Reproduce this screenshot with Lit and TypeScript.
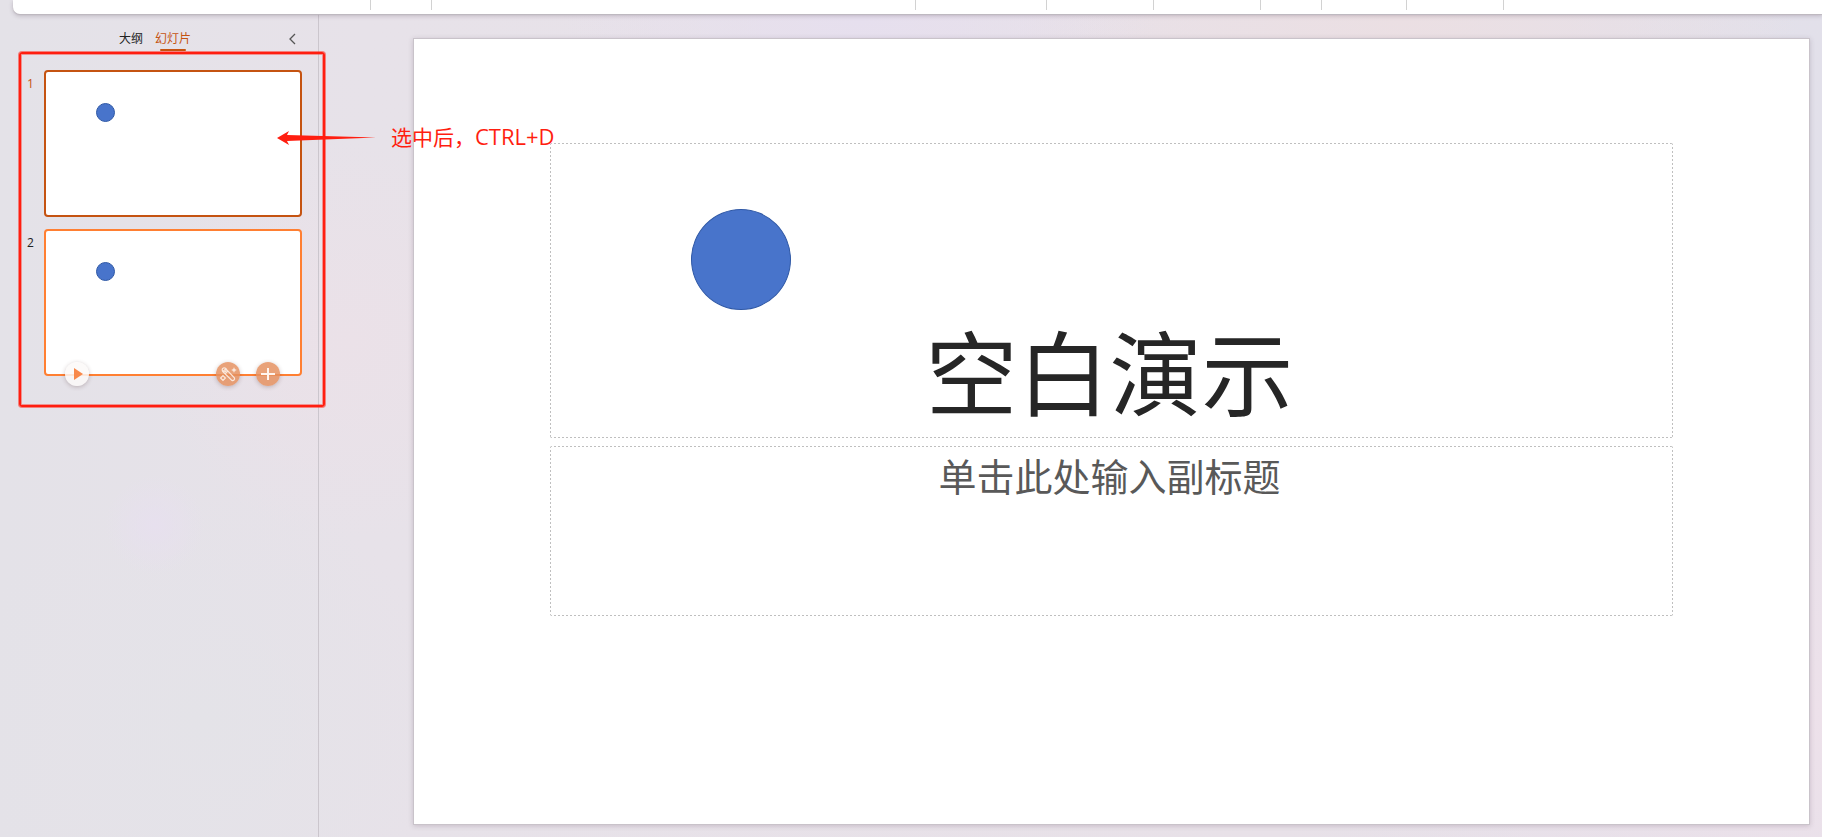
import { LitElement, html, css } from "lit";
import { customElement, property, state } from "lit/decorators.js";

const fonts = css`"Open Sans", "Noto Sans CJK SC", sans-serif`;

/** Bottom edge of the ribbon: group widths are data, each ends in a separator. */
@customElement("ribbon-edge")
class RibbonEdge extends LitElement {
  static styles = css`
    :host {
      display: block;
      position: relative;
      z-index: 1;
      margin-left: 13px;
      height: 14px;
      background: #fff;
      border-bottom-left-radius: 7px;
      box-shadow: 0 1px 1px #bdb8bf, 0 2px 4px rgba(80, 60, 80, 0.25);
    }
    .groups {
      display: flex;
      height: 10px;
    }
    .group {
      flex: none;
      box-sizing: border-box;
      border-right: 1px solid #d2d2d2;
    }
  `;
  private widths = [358, 61, 484, 131, 107, 107, 61, 85, 97];

  render() {
    return html`<div class="groups">
      ${this.widths.map((w) => html`<div class="group" style="width:${w}px"></div>`)}
    </div>`;
  }
}

@customElement("slide-thumb")
class SlideThumb extends LitElement {
  @property({ type: Number }) number = 1;
  @property({ type: Boolean, reflect: true }) active = false;
  @property({ type: Boolean }) tools = false;

  static styles = css`
    :host {
      display: flex;
      position: relative;
      font-family: ${fonts};
      --edge: #ff7f32;
      --num: #222;
    }
    :host([active]) {
      --edge: #c55311;
      --num: #c55311;
    }
    .num {
      width: 17px;
      padding-top: 5px;
      font-size: 12px;
      line-height: 18px;
      color: var(--num);
    }
    .thumb {
      flex: 1;
      display: block;
      box-sizing: border-box;
      height: 147px;
      padding: 0;
      border: 2px solid var(--edge);
      border-radius: 4px;
      background: #fff;
    }
    .preview {
      display: block;
      width: 100%;
      height: 100%;
    }
    .tool {
      position: absolute;
      bottom: -10px;
      width: 24px;
      height: 24px;
      padding: 0;
      border: 0;
      border-radius: 50%;
      background: rgba(229, 146, 98, 0.85);
      box-shadow: 0 1px 4px rgba(90, 60, 60, 0.3);
    }
    .tool svg {
      display: block;
    }
    .play {
      left: 38px;
      background: rgba(252, 249, 248, 0.85);
    }
    .wand {
      right: 62px;
    }
    .add {
      right: 22px;
    }
  `;

  render() {
    return html`
      <span class="num">${this.number}</span>
      <button class="thumb" aria-label="幻灯片 ${this.number}">
        <svg class="preview" viewBox="0 0 254 143">
          <circle cx="59.5" cy="40.5" r="9" fill="#4874cb" stroke="#3059a6" stroke-width="1" />
        </svg>
      </button>
      ${this.tools
        ? html`
            <button class="tool play" aria-label="播放">
              <svg width="24" height="24"><path d="M9 6L18 12L9 18Z" fill="#f8894b" /></svg>
            </button>
            <button class="tool wand" aria-label="美化">
              <svg width="24" height="24" fill="none" stroke="#fbe8dc" stroke-width="1.2">
                <path d="M6.8 9.6L9.8 6.8L18.4 15.9Q19 17 18 18Q17 19 15.9 18.4ZM9 11.8L11.8 9" />
                <circle cx="8.2" cy="7.8" r="2" />
                <circle cx="18" cy="8" r="1.6" fill="#fbe8dc" stroke="none" />
                <path d="M18 5.6V10.4M15.6 8H20.4" stroke-width="0.8" />
                <path d="M7 13.6L9.4 16L7 18.4L4.6 16Z" />
              </svg>
            </button>
            <button class="tool add" aria-label="新建幻灯片">
              <svg width="24" height="24"><path d="M12 6V18M5 12H19" stroke="#fff5ee" stroke-width="2" /></svg>
            </button>
          `
        : null}
    `;
  }
}

@customElement("slide-panel")
class SlidePanel extends LitElement {
  @state() private tab = "slides";

  static styles = css`
    :host {
      display: block;
      box-sizing: border-box;
      border-right: 1px solid #cbc6cd;
      font-family: ${fonts};
    }
    .head {
      box-sizing: border-box;
      display: grid;
      grid-template-columns: 1fr auto 1fr;
      padding: 15px 20px 0 12px;
      height: 56px;
    }
    .tabs {
      grid-column: 2;
      display: flex;
      gap: 12px;
      align-items: flex-start;
    }
    button {
      padding: 0;
      border: 0;
      background: none;
      font: inherit;
    }
    .tab {
      display: flex;
      flex-direction: column;
      align-items: center;
      font-size: 12px;
      line-height: 20px;
      color: #222;
    }
    .tab.on {
      color: #c55311;
    }
    .tab.on::after {
      content: "";
      width: 26px;
      height: 2px;
      border-radius: 1px;
      background: #c55311;
    }
    .collapse {
      justify-self: end;
      align-self: start;
      height: 20px;
    }
    .collapse svg {
      display: block;
    }
    .list {
      display: flex;
      flex-direction: column;
      gap: 12px;
      padding: 0 16px 0 27px;
    }
  `;

  render() {
    const tab = (id: string, label: string) => html`<button
      class="tab ${this.tab === id ? "on" : ""}"
      @click=${() => (this.tab = id)}
    >${label}</button>`;
    return html`
      <div class="head">
        <div class="tabs">${tab("outline", "大纲")}${tab("slides", "幻灯片")}</div>
        <button class="collapse" aria-label="收起">
          <svg width="10" height="20" fill="none" stroke="#555" stroke-width="1.3">
            <path d="M7 5L2 10L7 15" />
          </svg>
        </button>
      </div>
      <div class="list">
        <slide-thumb .number=${1} active></slide-thumb>
        <slide-thumb .number=${2} tools></slide-thumb>
      </div>
    `;
  }
}

@customElement("slide-canvas")
class SlideCanvas extends LitElement {
  static styles = css`
    :host {
      display: flex;
      flex-direction: column;
      gap: 8px;
      position: relative;
      box-sizing: border-box;
      aspect-ratio: 16 / 9;
      padding: 104px 136px;
      background: #fff;
      box-shadow: 0 0 0 1px #c9c3ca, 0 1px 5px 1px rgba(80, 60, 80, 0.22);
      font-family: "Noto Sans CJK SC", sans-serif;
    }
    .box {
      box-sizing: border-box;
      margin: 0;
      padding-right: 4px;
      text-align: center;
      font-weight: 400;
      border-radius: 2px;
      background:
        repeating-linear-gradient(90deg, #bfbfbf 0 2px, transparent 2px 4px) top / 100% 1px no-repeat,
        repeating-linear-gradient(90deg, #bfbfbf 0 2px, transparent 2px 4px) bottom / 100% 1px no-repeat,
        repeating-linear-gradient(#bfbfbf 0 2px, transparent 2px 4px) left / 1px 100% no-repeat,
        repeating-linear-gradient(#bfbfbf 0 2px, transparent 2px 4px) right / 1px 100% no-repeat;
    }
    .title {
      display: flex;
      align-items: flex-end;
      justify-content: center;
      height: 295px;
      padding-bottom: 13px;
      font-size: 92px;
      line-height: 112px;
      color: #262626;
    }
    .subtitle {
      height: 170px;
      padding-top: 2px;
      font-size: 38px;
      line-height: 54px;
      color: #595959;
    }
    .disc {
      position: absolute;
      left: 277px;
      top: 170px;
      box-sizing: border-box;
      width: 100px;
      height: 101px;
      border: 1px solid #3059a6;
      border-radius: 50%;
      background: #4874cb;
    }
  `;

  render() {
    return html`
      <h1 class="box title">空白演示</h1>
      <p class="box subtitle">单击此处输入副标题</p>
      <div class="disc"></div>
    `;
  }
}

@customElement("app-root")
class AppRoot extends LitElement {
  static styles = css`
    :host {
      display: block;
      position: relative;
      overflow: hidden;
      min-height: 100vh;
      font-family: ${fonts};
      background:
        radial-gradient(circle at 155px 525px, #e7e0ee 0, transparent 50px),
        radial-gradient(circle at 350px 340px, #ebe1e8 0, transparent 200px),
        radial-gradient(ellipse 300px 120px at 860px 20px, #e6dfee 0, transparent 100%),
        radial-gradient(ellipse 400px 160px at 1400px 20px, #ebdfe3 0, transparent 100%),
        radial-gradient(circle at 100% 85%, #ede1ea 0, transparent 500px),
        radial-gradient(circle at 200px 720px, #e4e3e8 0, transparent 240px),
        linear-gradient(90deg, #e4e2e8, #e7e2e9 20%, #e8e1e8 70%, #e2e0ea);
    }
    .body {
      display: flex;
      align-items: stretch;
      min-height: calc(100vh - 14px);
    }
    slide-panel {
      flex: none;
      width: 319px;
    }
    .stage {
      flex: 1;
      min-width: 0;
      padding: 25px 13px 12px 95px;
    }
    .frame {
      position: absolute;
      z-index: 2;
      left: 19px;
      top: 52px;
      box-sizing: border-box;
      width: 306px;
      height: 355px;
      border: 2px solid #ff1e10;
      border-radius: 3px;
      box-shadow: 0 0 0 1px rgba(255, 30, 16, 0.5), inset 0 0 0 1px rgba(255, 30, 16, 0.4);
      pointer-events: none;
    }
    .arrow {
      position: absolute;
      z-index: 2;
      left: 277px;
      top: 130px;
    }
    .note {
      position: absolute;
      z-index: 2;
      left: 391px;
      top: 121px;
      font-size: 21px;
      line-height: 30px;
      white-space: nowrap;
      color: #ff1e10;
    }
    .keys {
      font-size: 22px;
    }
  `;

  render() {
    return html`
      <ribbon-edge></ribbon-edge>
      <div class="body">
        <slide-panel></slide-panel>
        <main class="stage"><slide-canvas></slide-canvas></main>
      </div>
      <div class="frame"></div>
      <svg class="arrow" width="100" height="16">
        <path d="M0 8L12 1L10 5L99 7.4L10 11L12 15Z" fill="#ff1e10" />
      </svg>
      <div class="note">选中后，<span class="keys">CTRL+D</span></div>
    `;
  }
}
